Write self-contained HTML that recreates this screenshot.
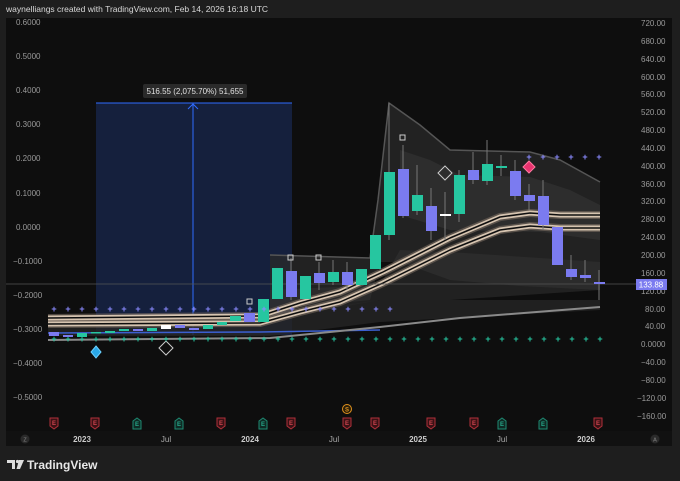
<!DOCTYPE html>
<html><head><meta charset="utf-8"><style>
html,body{margin:0;padding:0;background:#1e1e1e;width:680px;height:481px;overflow:hidden;font-family:"Liberation Sans",sans-serif}
svg{position:absolute;left:0;top:0}
</style></head><body>
<svg width="680" height="481" viewBox="0 0 680 481" font-family="Liberation Sans, sans-serif">
<rect width="680" height="481" fill="#1e1e1e"/>
<text x="6" y="12" font-size="8.5" fill="#d8d8d8">waynelliangs created with TradingView.com, Feb 14, 2026 16:18 UTC</text>
<rect x="6" y="18" width="666" height="428" fill="#0e0e0e"/>
<rect x="6" y="431" width="666" height="15" fill="#111"/>
<!-- measurement box -->
<rect x="96" y="103" width="196" height="232" fill="#15203d"/>
<line x1="96" y1="103" x2="292" y2="103" stroke="#2f6bff" stroke-width="1"/>
<line x1="193" y1="103" x2="193" y2="335" stroke="#2f6bff" stroke-width="1"/>
<path d="M188 109 L193 104 L198 109" fill="none" stroke="#2f6bff"/>
<rect x="143" y="84" width="104" height="14" rx="2" fill="#2a2a2a"/>
<text x="195" y="94" font-size="8" fill="#e0e0e0" text-anchor="middle">516.55 (2,075.70%) 51,655</text>
<!-- clouds -->
<path d="M270 255 L370 258 L378 200 L389 103 L420 125 L450 150 L530 152 L560 160 L600 182 L600 290 L560 288 L520 286 L450 280 L400 262 L380 262 L370 300 L270 310 Z" fill="#2a2a2a" opacity="0.75"/>
<path d="M270 255 L370 258 L378 200 L389 103 L420 125 L450 150 L530 152 L560 160 L600 182" fill="none" stroke="#555" stroke-width="1.5"/>
<path d="M400 150 L430 160 L460 175 L530 177 L570 190 L600 205 L600 240 L540 232 L450 230 L400 215 Z" fill="#363636" opacity="0.6"/>
<path d="M270 290 L380 285 L400 250 L450 252 L600 262 L600 290 L450 300 L380 300 L270 320 Z" fill="#333" opacity="0.5"/>
<path d="M48 318 L270 315 L380 300 L600 300 L600 310 L380 322 L270 336 L48 336 Z" fill="#252525" opacity="0.8"/>
<!-- bottom lines -->
<path d="M48 333 L260 332 L380 330" fill="none" stroke="#3b5fd0" stroke-width="1.5"/>
<path d="M48 340 L270 338 L380 327 L460 318 L600 307" fill="none" stroke="#8a8a8a" stroke-width="2"/>
<!-- ribbons -->
<g fill="none" stroke-linejoin="round">
<path d="M48 318 L260 316 L300 303 L340 292 L383 272 L450 238 L500 217 L530 213 L560 215 L600 215" stroke="#7a6c60" stroke-width="8" opacity="0.6"/>
<path d="M48 324 L260 323 L300 312 L340 302 L383 283 L450 250 L500 230 L530 226 L560 228 L600 228" stroke="#7a6c60" stroke-width="8" opacity="0.6"/>
<path d="M48 318 L260 316 L300 303 L340 292 L383 272 L450 238 L500 217 L530 213 L560 215 L600 215" stroke="#d6c4b0" stroke-width="5"/>
<path d="M48 318 L260 316 L300 303 L340 292 L383 272 L450 238 L500 217 L530 213 L560 215 L600 215" stroke="#0e0e0e" stroke-width="1.5"/>
<path d="M48 324 L260 323 L300 312 L340 302 L383 283 L450 250 L500 230 L530 226 L560 228 L600 228" stroke="#d6c4b0" stroke-width="5"/>
<path d="M48 324 L260 323 L300 312 L340 302 L383 283 L450 250 L500 230 L530 226 L560 228 L600 228" stroke="#0e0e0e" stroke-width="1.5"/>
</g>
<!-- price line -->
<line x1="6" y1="284" x2="636" y2="284" stroke="#555" stroke-width="0.7"/>
<!-- wicks -->
<g stroke="#777" stroke-width="1">
<line x1="389" y1="103" x2="389" y2="240"/><line x1="403" y1="145" x2="403" y2="218"/><line x1="417" y1="165" x2="417" y2="215"/><line x1="431" y1="188" x2="431" y2="240"/><line x1="445" y1="192" x2="445" y2="240"/><line x1="459" y1="170" x2="459" y2="222"/><line x1="473" y1="152" x2="473" y2="184"/><line x1="487" y1="140" x2="487" y2="185"/><line x1="501" y1="155" x2="501" y2="176"/><line x1="515" y1="160" x2="515" y2="200"/><line x1="529" y1="184" x2="529" y2="210"/><line x1="543" y1="180" x2="543" y2="230"/><line x1="571" y1="255" x2="571" y2="280"/><line x1="585" y1="260" x2="585" y2="282"/><line x1="599" y1="270" x2="599" y2="300"/>
<line x1="291" y1="258" x2="291" y2="300"/><line x1="319" y1="262" x2="319" y2="290"/><line x1="333" y1="260" x2="333" y2="285"/><line x1="347" y1="262" x2="347" y2="290"/>
</g>
<!-- candles -->
<g>
<rect x="49" y="332" width="10" height="4" fill="#7b7bf0"/><rect x="63" y="335" width="10" height="2" fill="#7b7bf0"/><rect x="77" y="333" width="10" height="4" fill="#26c6a0"/><rect x="91" y="332" width="10" height="1.5" fill="#26c6a0"/><rect x="105" y="331" width="10" height="2" fill="#26c6a0"/><rect x="119" y="329" width="10" height="2" fill="#26c6a0"/><rect x="133" y="329" width="10" height="2" fill="#7b7bf0"/><rect x="147" y="328" width="10" height="3" fill="#26c6a0"/><rect x="161" y="325" width="10" height="4" fill="#fff"/><rect x="175" y="325" width="10" height="3" fill="#7b7bf0"/><rect x="189" y="328" width="10" height="2" fill="#7b7bf0"/><rect x="203" y="325" width="10" height="4" fill="#26c6a0"/><rect x="217" y="322" width="10" height="3" fill="#26c6a0"/>
<rect x="230" y="316" width="11" height="5" fill="#26c6a0"/><rect x="244" y="313" width="11" height="9" fill="#7b7bf0"/><rect x="258" y="299" width="11" height="23" fill="#26c6a0"/><rect x="272" y="268" width="11" height="31" fill="#26c6a0"/><rect x="286" y="271" width="11" height="26" fill="#7b7bf0"/><rect x="300" y="276" width="11" height="23" fill="#26c6a0"/><rect x="314" y="273" width="11" height="10" fill="#7b7bf0"/><rect x="328" y="272" width="11" height="10" fill="#26c6a0"/><rect x="342" y="272" width="11" height="13" fill="#7b7bf0"/><rect x="356" y="269" width="11" height="16" fill="#26c6a0"/><rect x="370" y="235" width="11" height="34" fill="#26c6a0"/>
<rect x="384" y="172" width="11" height="63" fill="#26c6a0"/><rect x="398" y="169" width="11" height="47" fill="#7b7bf0"/><rect x="412" y="195" width="11" height="16" fill="#26c6a0"/><rect x="426" y="206" width="11" height="25" fill="#7b7bf0"/><rect x="440" y="214" width="11" height="2" fill="#fff"/><rect x="454" y="175" width="11" height="39" fill="#26c6a0"/><rect x="468" y="170" width="11" height="10" fill="#7b7bf0"/><rect x="482" y="164" width="11" height="17" fill="#26c6a0"/><rect x="496" y="166" width="11" height="2" fill="#26c6a0"/><rect x="510" y="171" width="11" height="25" fill="#7b7bf0"/><rect x="524" y="195" width="11" height="6" fill="#7b7bf0"/><rect x="538" y="196" width="11" height="29" fill="#7b7bf0"/><rect x="552" y="227" width="11" height="38" fill="#7b7bf0"/><rect x="566" y="269" width="11" height="8" fill="#7b7bf0"/><rect x="580" y="275" width="11" height="3" fill="#7b7bf0"/><rect x="594" y="282" width="11" height="2" fill="#7b7bf0"/>
</g>
<!-- markers -->
<g fill="none" stroke="#ccc" stroke-width="1">
<rect x="247" y="299" width="5" height="5"/><rect x="288" y="255" width="5" height="5"/><rect x="316" y="255" width="5" height="5"/><rect x="400" y="135" width="5" height="5"/>
<path d="M445 166 L452 173 L445 180 L438 173 Z"/><path d="M166 341 L173 348 L166 355 L159 348 Z"/>
</g>
<path d="M529 161 L535 167 L529 173 L523 167 Z" fill="#e8336f" stroke="#ff7aa0"/>
<path d="M96 346 L101 352 L96 358 L91 352 Z" fill="#2aa8e8" stroke="#6ad0ff"/>
<g font-size="9" font-weight="bold" fill="#8a8aff" text-anchor="middle">
<text x="54" y="312">+</text><text x="68" y="312">+</text><text x="82" y="312">+</text><text x="96" y="312">+</text><text x="110" y="312">+</text><text x="124" y="312">+</text><text x="138" y="312">+</text><text x="152" y="312">+</text><text x="166" y="312">+</text><text x="180" y="312">+</text><text x="194" y="312">+</text><text x="208" y="312">+</text><text x="222" y="312">+</text><text x="236" y="312">+</text><text x="250" y="312">+</text><text x="264" y="312">+</text><text x="278" y="312">+</text><text x="292" y="312">+</text><text x="306" y="312">+</text><text x="320" y="312">+</text><text x="334" y="312">+</text><text x="348" y="312">+</text><text x="362" y="312">+</text><text x="376" y="312">+</text><text x="390" y="312">+</text>
<text x="529" y="160">+</text><text x="543" y="160">+</text><text x="557" y="160">+</text><text x="571" y="160">+</text><text x="585" y="160">+</text><text x="599" y="160">+</text>
</g>
<g font-size="9" font-weight="bold" fill="#26c6a0" text-anchor="middle">
<text x="54" y="342">+</text><text x="68" y="342">+</text><text x="82" y="342">+</text><text x="96" y="342">+</text><text x="110" y="342">+</text><text x="124" y="342">+</text><text x="138" y="342">+</text><text x="152" y="342">+</text><text x="166" y="342">+</text><text x="180" y="342">+</text><text x="194" y="342">+</text><text x="208" y="342">+</text><text x="222" y="342">+</text><text x="236" y="342">+</text><text x="250" y="342">+</text><text x="264" y="342">+</text><text x="278" y="342">+</text><text x="292" y="342">+</text><text x="306" y="342">+</text><text x="320" y="342">+</text><text x="334" y="342">+</text><text x="348" y="342">+</text><text x="362" y="342">+</text><text x="376" y="342">+</text><text x="390" y="342">+</text><text x="404" y="342">+</text><text x="418" y="342">+</text><text x="432" y="342">+</text><text x="446" y="342">+</text><text x="460" y="342">+</text><text x="474" y="342">+</text><text x="488" y="342">+</text><text x="502" y="342">+</text><text x="516" y="342">+</text><text x="530" y="342">+</text><text x="544" y="342">+</text><text x="558" y="342">+</text><text x="572" y="342">+</text><text x="586" y="342">+</text><text x="600" y="342">+</text>
</g>
<!-- left axis -->
<g font-size="8" fill="#9a9a9a">
<text x="16" y="25">0.6000</text><text x="16" y="59">0.5000</text><text x="16" y="93">0.4000</text><text x="16" y="127">0.3000</text><text x="16" y="161">0.2000</text><text x="16" y="196">0.1000</text><text x="16" y="230">0.0000</text><text x="13" y="264">−0.1000</text><text x="13" y="298">−0.2000</text><text x="13" y="332">−0.3000</text><text x="13" y="366">−0.4000</text><text x="13" y="400">−0.5000</text>
</g>
<!-- right axis -->
<g font-size="8" fill="#9a9a9a">
<text x="641" y="26">720.00</text><text x="641" y="44">680.00</text><text x="641" y="62">640.00</text><text x="641" y="80">600.00</text><text x="641" y="97">560.00</text><text x="641" y="115">520.00</text><text x="641" y="133">480.00</text><text x="641" y="151">440.00</text><text x="641" y="169">400.00</text><text x="641" y="187">360.00</text><text x="641" y="204">320.00</text><text x="641" y="222">280.00</text><text x="641" y="240">240.00</text><text x="641" y="258">200.00</text><text x="641" y="276">160.00</text><text x="641" y="294">120.00</text><text x="645" y="312">80.00</text><text x="645" y="329">40.00</text><text x="641" y="347">0.0000</text><text x="641" y="365">−40.00</text><text x="641" y="383">−80.00</text><text x="637" y="401">−120.00</text><text x="637" y="419">−160.00</text>
</g>
<rect x="636" y="279" width="31" height="11" fill="#7b7bf0"/>
<text x="651" y="287.5" font-size="8" fill="#fff" text-anchor="middle">133.88</text>
<!-- events -->
<g font-size="6" font-weight="bold" text-anchor="middle">
<g stroke="#b0303a" fill="#3a1215"><path d="M50 418 h8 v8 l-4 3 l-4 -3 Z"/><path d="M91 418 h8 v8 l-4 3 l-4 -3 Z"/><path d="M217 418 h8 v8 l-4 3 l-4 -3 Z"/><path d="M287 418 h8 v8 l-4 3 l-4 -3 Z"/><path d="M343 418 h8 v8 l-4 3 l-4 -3 Z"/><path d="M371 418 h8 v8 l-4 3 l-4 -3 Z"/><path d="M427 418 h8 v8 l-4 3 l-4 -3 Z"/><path d="M470 418 h8 v8 l-4 3 l-4 -3 Z"/><path d="M594 418 h8 v8 l-4 3 l-4 -3 Z"/></g>
<g stroke="#1f8a72" fill="#0f2a24"><path d="M133 421 l4 -3 l4 3 v8 h-8 Z"/><path d="M175 421 l4 -3 l4 3 v8 h-8 Z"/><path d="M259 421 l4 -3 l4 3 v8 h-8 Z"/><path d="M498 421 l4 -3 l4 3 v8 h-8 Z"/><path d="M539 421 l4 -3 l4 3 v8 h-8 Z"/></g>
<g fill="#d04550"><text x="54" y="425">E</text><text x="95" y="425">E</text><text x="221" y="425">E</text><text x="291" y="425">E</text><text x="347" y="425">E</text><text x="375" y="425">E</text><text x="431" y="425">E</text><text x="474" y="425">E</text><text x="598" y="425">E</text></g>
<g fill="#26a88a"><text x="137" y="426">E</text><text x="179" y="426">E</text><text x="263" y="426">E</text><text x="502" y="426">E</text><text x="543" y="426">E</text></g>
<circle cx="347" cy="409" r="4.5" fill="#2a1e08" stroke="#e0921e"/><text x="347" y="411.5" fill="#e0921e">S</text>
</g>
<!-- time axis -->
<circle cx="25" cy="439" r="4.5" fill="#2a2a2a"/><text x="25" y="441.5" font-size="5.5" fill="#888" text-anchor="middle">Z</text>
<circle cx="655" cy="439" r="4.5" fill="#2a2a2a"/><text x="655" y="441.5" font-size="5.5" fill="#888" text-anchor="middle">A</text>
<g font-size="8" fill="#aaa" text-anchor="middle">
<text x="82" y="442" font-weight="bold" fill="#ccc">2023</text><text x="166" y="442">Jul</text><text x="250" y="442" font-weight="bold" fill="#ccc">2024</text><text x="334" y="442">Jul</text><text x="418" y="442" font-weight="bold" fill="#ccc">2025</text><text x="502" y="442">Jul</text><text x="586" y="442" font-weight="bold" fill="#ccc">2026</text>
</g>
<!-- footer logo -->
<path d="M7 460 h8 v9 h-3 v-6 h-5 Z" fill="#ddd"/><circle cx="17.5" cy="461.5" r="1.6" fill="#ddd"/><path d="M19 460 h5 l-4 9 h-3.5 Z" fill="#ddd"/>
<text x="27" y="469" font-size="12" fill="#e8e8e8" font-weight="bold">TradingView</text>
</svg>
</body></html>
